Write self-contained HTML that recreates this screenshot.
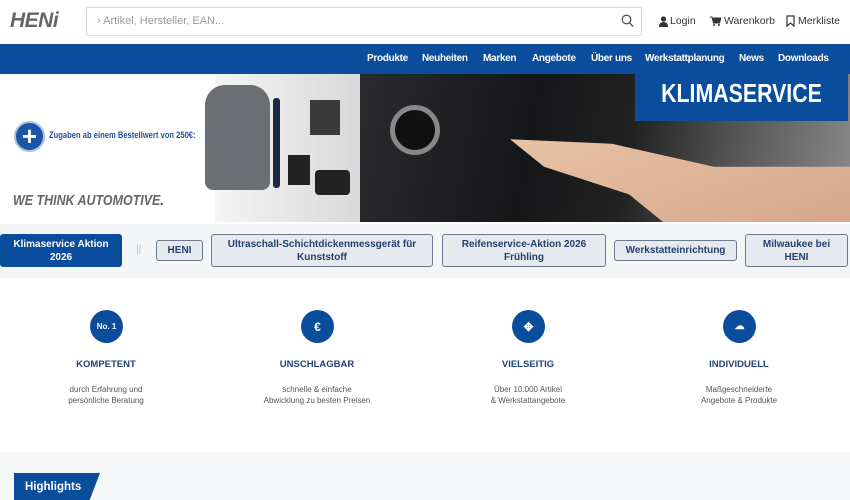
<!DOCTYPE html>
<html><head><meta charset="utf-8"><style>
*{margin:0;padding:0;box-sizing:border-box}
body{width:850px;height:500px;overflow:hidden;background:#fff;font-family:"Liberation Sans",sans-serif;position:relative}
.a{position:absolute}
.nav a{position:absolute;top:53px;color:#fff;font-size:10px;font-weight:bold;letter-spacing:-0.3px;white-space:nowrap}
.chip{position:absolute;background:#e6e9ee;border:1px solid #6a7a8c;border-radius:3px;color:#23406e;font-size:10px;font-weight:bold;text-align:center;display:flex;align-items:center;justify-content:center;line-height:13px}
.ic{position:absolute;width:33px;height:33px;border-radius:50%;background:#0a4d9c;color:#fff;font-weight:bold;font-size:8px;display:flex;align-items:center;justify-content:center;top:310px}
.t{position:absolute;top:359px;width:200px;text-align:center;color:#1e4277;font-weight:bold;font-size:9.5px}
.d{position:absolute;top:384px;width:200px;text-align:center;color:#555;font-size:8px;line-height:11px}
</style></head><body>
<div class="a" style="left:10px;top:9px;font-size:21px;font-weight:bold;font-style:italic;color:#666;letter-spacing:-0.5px">HENi</div>
<div class="a" style="left:86px;top:7px;width:556px;height:29px;border:1px solid #d5d8dc;border-radius:2px"></div>
<div class="a" style="left:97px;top:15px;font-size:11px;color:#999">› Artikel, Hersteller, EAN...</div>
<svg class="a" style="left:621px;top:14px" width="13" height="14" viewBox="0 0 13 14"><circle cx="5.5" cy="5.5" r="4.3" fill="none" stroke="#555" stroke-width="1.3"/><line x1="8.6" y1="8.8" x2="12" y2="12.5" stroke="#555" stroke-width="1.4"/></svg>
<svg class="a" style="left:659px;top:16px" width="9" height="11"><circle cx="4.5" cy="3" r="2.6" fill="#333"/><path d="M0 11 Q0 6 4.5 6 Q9 6 9 11Z" fill="#333"/></svg>
<div class="a" style="left:670px;top:15px;font-size:10.5px;color:#333">Login</div>
<svg class="a" style="left:710px;top:16px" width="11" height="10"><path d="M0 1h2l1.5 6h6l1.5-5H3" fill="#333" stroke="#333"/><circle cx="4" cy="9" r="1" fill="#333"/><circle cx="9" cy="9" r="1" fill="#333"/></svg>
<div class="a" style="left:724px;top:15px;font-size:10.5px;color:#333">Warenkorb</div>
<svg class="a" style="left:786px;top:15px" width="9" height="12"><path d="M1 1h7v10l-3.5-3-3.5 3z" fill="none" stroke="#333" stroke-width="1.2"/></svg>
<div class="a" style="left:798px;top:15px;font-size:10.5px;color:#333">Merkliste</div>
<div class="a" style="left:0;top:44px;width:850px;height:30px;background:#0a4d9c"></div>
<div class="nav"><a style="left:367px">Produkte</a><a style="left:422px">Neuheiten</a><a style="left:483px">Marken</a><a style="left:532px">Angebote</a><a style="left:591px">Über uns</a><a style="left:645px">Werkstattplanung</a><a style="left:739px">News</a><a style="left:778px">Downloads</a></div>
<div class="a" style="left:0;top:74px;width:850px;height:148px;background:#fff"></div>
<div class="a" style="left:215px;top:74px;width:150px;height:148px;background:linear-gradient(90deg,#f4f4f4,#d8d8d8)"></div>
<div class="a" style="left:360px;top:74px;width:490px;height:148px;background:linear-gradient(100deg,#2a2b2e 0%,#151618 35%,#222 55%,#555 75%,#8a8a8a 100%)"></div>
<div class="a" style="left:205px;top:85px;width:65px;height:105px;background:#6b6f73;border-radius:20px 20px 8px 8px"></div>
<div class="a" style="left:273px;top:98px;width:7px;height:90px;background:#1c2a44;border-radius:3px"></div>
<div class="a" style="left:310px;top:100px;width:30px;height:35px;background:#3a3a3a"></div>
<div class="a" style="left:288px;top:155px;width:22px;height:30px;background:#222"></div>
<div class="a" style="left:315px;top:170px;width:35px;height:25px;background:#222;border-radius:4px"></div>
<div class="a" style="left:390px;top:105px;width:50px;height:50px;border-radius:50%;border:5px solid #888;background:#111"></div>
<div class="a" style="left:510px;top:130px;width:340px;height:92px;background:linear-gradient(160deg,#e8c4a8,#d6a78a);clip-path:polygon(0 10%,30% 15%,60% 40%,100% 40%,100% 100%,45% 100%,35% 70%,10% 40%)"></div>
<div class="a" style="left:635px;top:74px;width:213px;height:47px;background:#0a4d9c"></div>
<div class="a" style="left:635px;top:78px;width:213px;text-align:center;color:#fff;font-size:26px;font-weight:bold;transform:scaleX(.82);white-space:nowrap">KLIMASERVICE</div>
<div class="a" style="left:14px;top:121px;width:31px;height:31px;border-radius:50%;background:#1a55a8;border:2px solid #a9c2e6;color:#fff;font-size:26px;font-weight:bold;line-height:26px;text-align:center">+</div>
<div class="a" style="left:49px;top:130px;font-size:9.5px;font-weight:bold;color:#1f4f9a;transform:scaleX(.8);transform-origin:left;white-space:nowrap">Zugaben ab einem Bestellwert von 250€:</div>
<div class="a" style="left:13px;top:192px;font-size:15px;font-weight:bold;font-style:italic;color:#666;transform:scaleX(.83);transform-origin:left;white-space:nowrap">WE THINK AUTOMOTIVE<span style="color:#0a4d9c">.</span></div>
<div class="a" style="left:0;top:224px;width:850px;height:54px;background:#f4f5f7"></div>
<div class="chip" style="left:0;top:234px;width:122px;height:33px;background:#0a4d9c;border-color:#0a4d9c;color:#fff">Klimaservice Aktion<br>2026</div>
<div class="a" style="left:136px;top:244px;font-size:10px;color:#bbb">||</div>
<div class="chip" style="left:156px;top:240px;width:47px;height:21px">HENI</div>
<div class="chip" style="left:211px;top:234px;width:222px;height:33px">Ultraschall-Schichtdickenmessgerät für<br>Kunststoff</div>
<div class="chip" style="left:442px;top:234px;width:164px;height:33px">Reifenservice-Aktion 2026<br>Frühling</div>
<div class="chip" style="left:614px;top:240px;width:123px;height:21px">Werkstatteinrichtung</div>
<div class="chip" style="left:745px;top:234px;width:103px;height:33px">Milwaukee bei<br>HENI</div>
<div class="ic" style="left:90px">No. 1</div>
<div class="ic" style="left:301px;font-size:12px">€</div>
<div class="ic" style="left:512px;font-size:12px">✥</div>
<div class="ic" style="left:723px;font-size:10px">☁</div>
<div class="t" style="left:6px">KOMPETENT</div>
<div class="t" style="left:217px">UNSCHLAGBAR</div>
<div class="t" style="left:428px">VIELSEITIG</div>
<div class="t" style="left:639px">INDIVIDUELL</div>
<div class="d" style="left:6px">durch Erfahrung und<br>persönliche Beratung</div>
<div class="d" style="left:217px">schnelle &amp; einfache<br>Abwicklung zu besten Preisen</div>
<div class="d" style="left:428px">Über 10.000 Artikel<br>&amp; Werkstattangebote</div>
<div class="d" style="left:639px">Maßgeschneiderte<br>Angebote &amp; Produkte</div>
<div class="a" style="left:0;top:452px;width:850px;height:48px;background:#f5f7f9"></div>
<div class="a" style="left:14px;top:473px;width:86px;height:27px;background:#0a4d9c;clip-path:polygon(0 0,100% 0,88% 100%,0 100%)"></div>
<div class="a" style="left:25px;top:481px;color:#fff;font-size:11.5px;font-weight:bold">Highlights</div>
</body></html>
